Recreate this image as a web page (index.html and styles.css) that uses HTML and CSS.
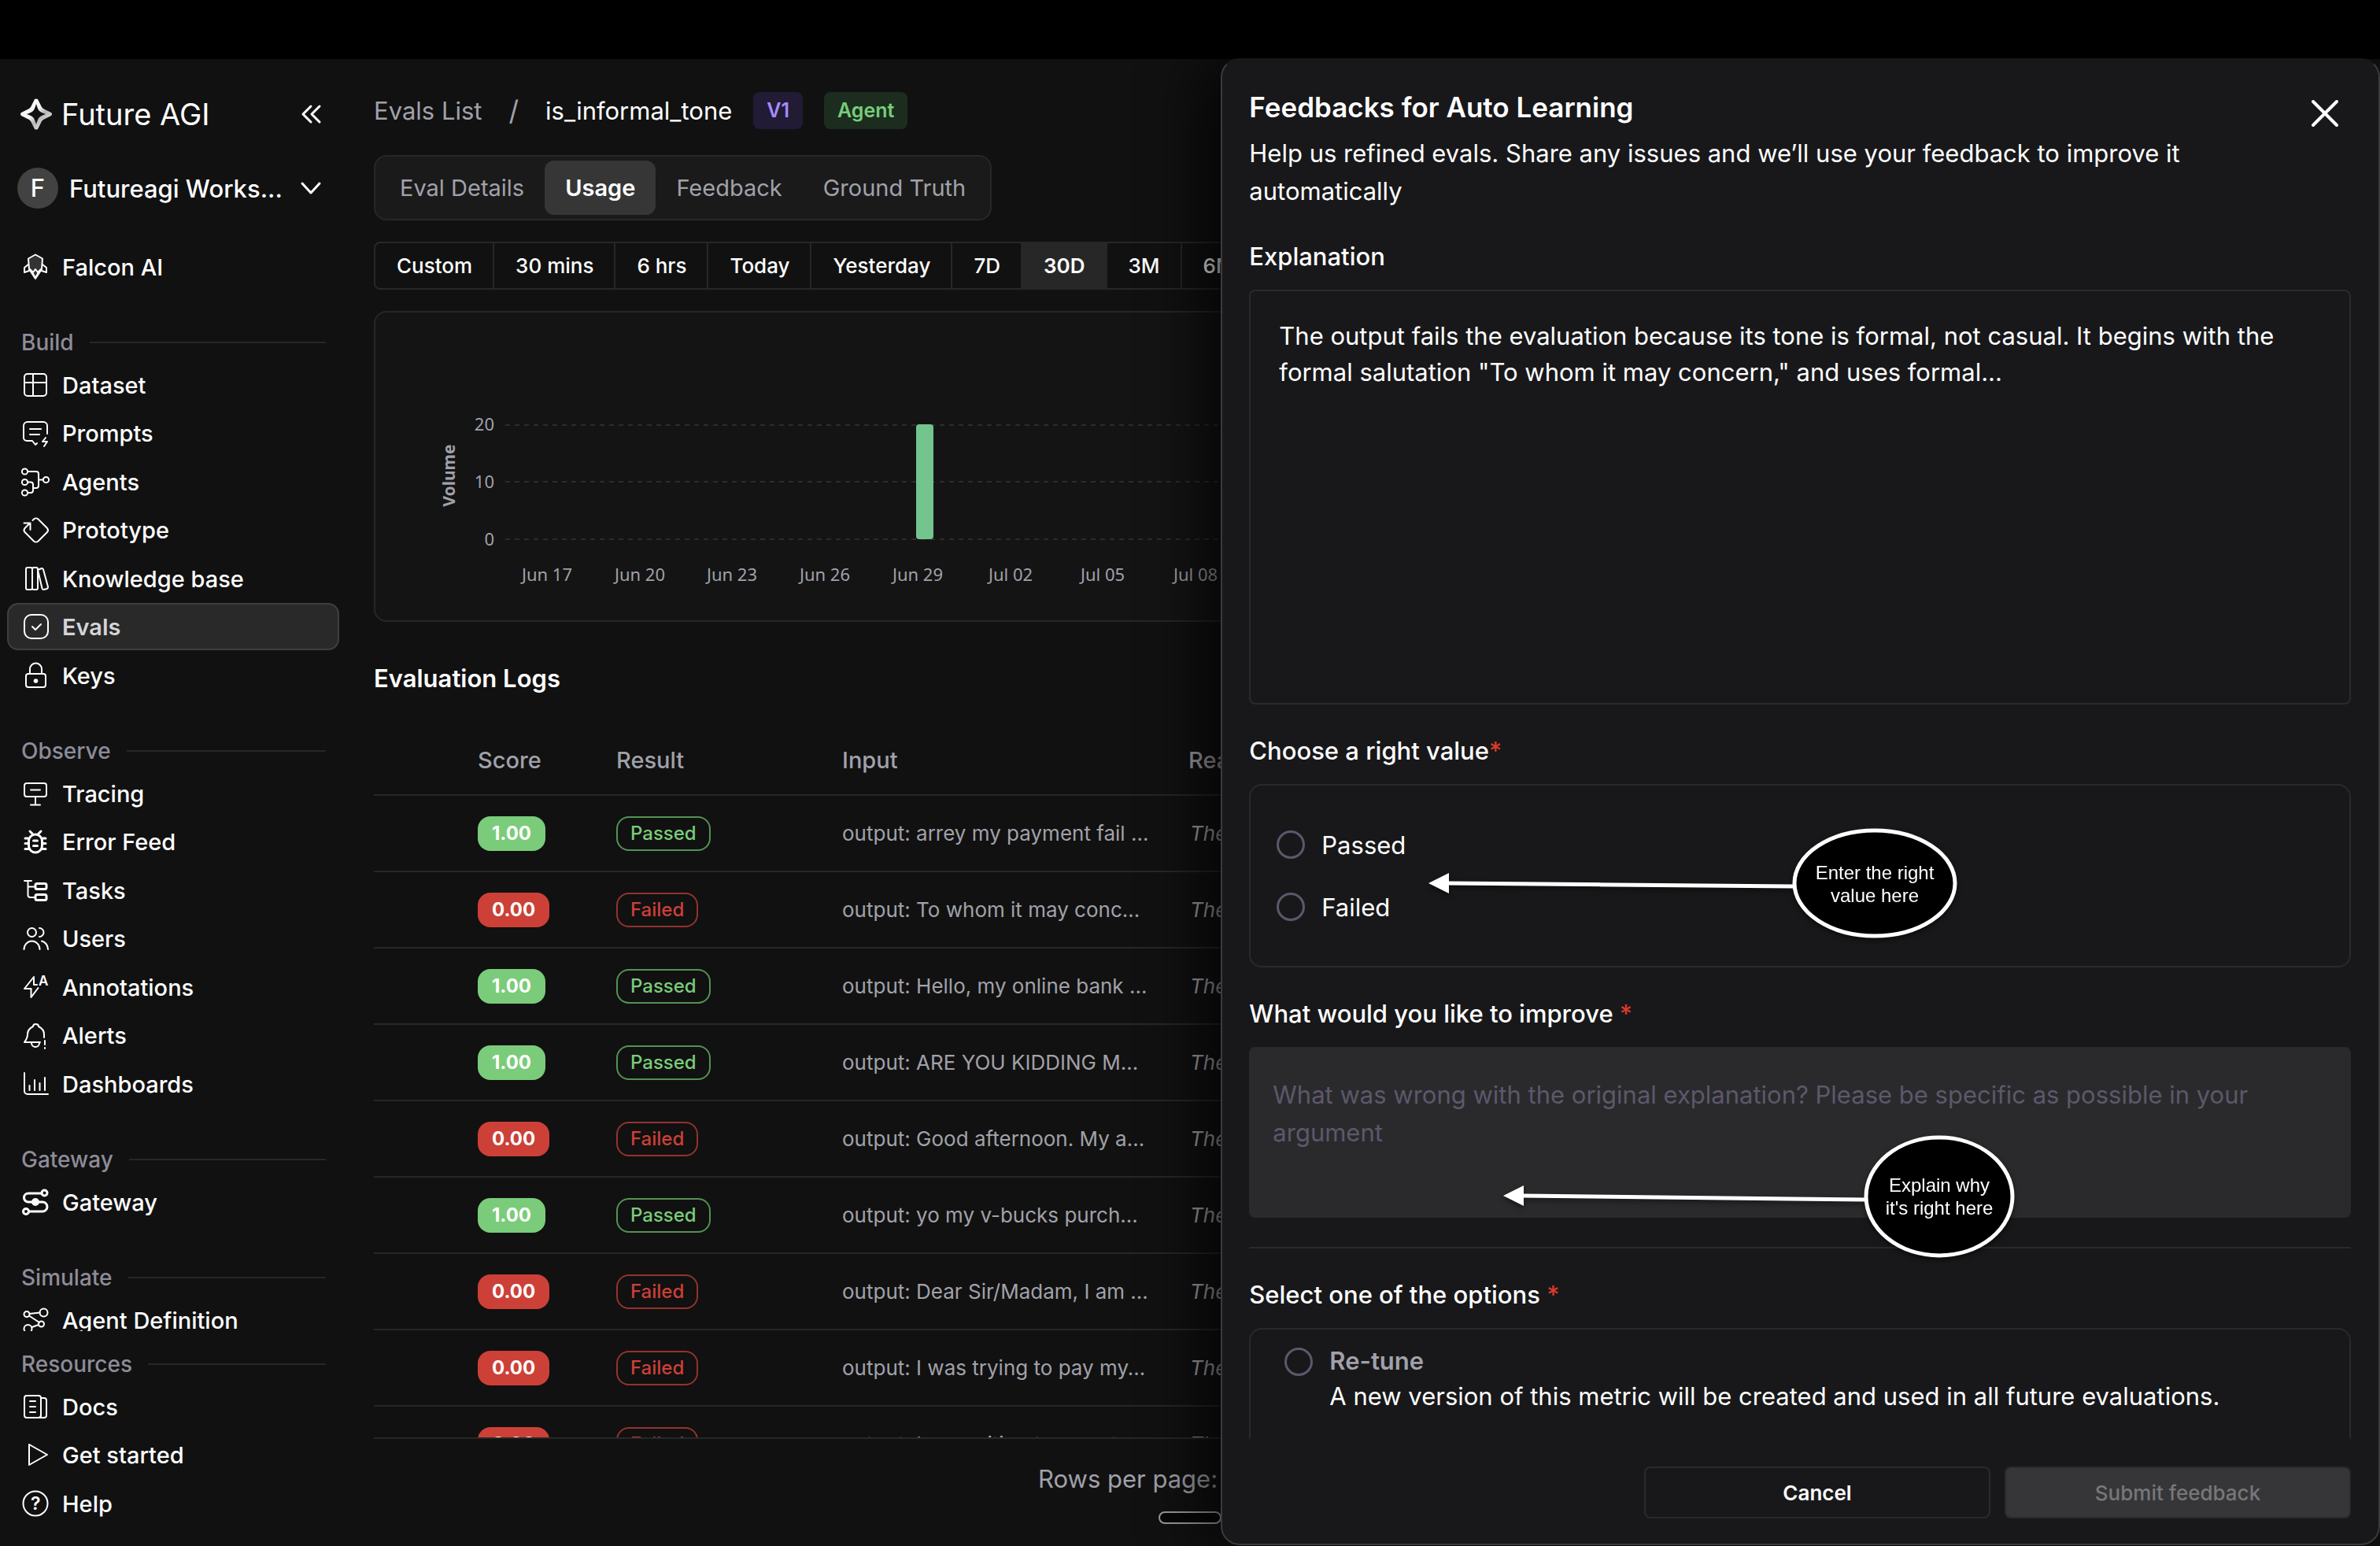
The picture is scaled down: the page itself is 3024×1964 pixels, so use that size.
FILE: index.html
```html
<!DOCTYPE html>
<html lang="en">
<head>
    <meta charset="UTF-8">
    <meta name="viewport" content="width=device-width, initial-scale=1.0">
    <title>Future AGI - Evals</title>
    <link rel="stylesheet" href="styles.css">
</head>
<body>

    <div class="app">
        <aside class="sidebar">
            <div class="brand">
                <svg class="brand-logo" viewBox="0 0 40 40">
                    <defs>
                        <linearGradient id="silver" x1="0" y1="0" x2="1" y2="1">
                            <stop offset="0" stop-color="#ffffff"/>
                            <stop offset="0.45" stop-color="#f2f2f2"/>
                            <stop offset="0.6" stop-color="#b5b5b5"/>
                            <stop offset="1" stop-color="#ffffff"/>
                        </linearGradient>
                    </defs>
                    <path class="brand-star" fill-rule="evenodd" d="M18 1Q20 0 22 1L27 11 29 13 39 18Q41 20 39 22L29 27 27 29 22 39Q20 40 18 39L13 29 11 27 1 22Q-1 20 1 18L11 13 13 11ZM20 7Q18 14 16 16 14 18 8 20 14 22 16 24 18 26 20 33 22 26 24 24 26 22 32 20 26 18 24 16 22 14 20 7Z"/>
                </svg>
                <span class="brand-name">Future AGI</span>
                <button class="icon-button" aria-label="Collapse sidebar">
                    <svg viewBox="0 0 26 26"><path d="M13 3 3 13l10 10M24 3 14 13l10 10"/></svg>
                </button>
            </div>

            <button class="workspace">
                <span class="avatar">F</span>
                <span class="workspace-name">Futureagi Works...</span>
                <svg viewBox="0 0 26 26"><path d="M2 7l11 12L24 7"/></svg>
            </button>

            <nav class="nav-scroll">
                <ul class="nav-list">
                    <li><a href="#"><svg viewBox="0 0 36 36"><path d="M18 2.500 27 7.500 26 21 18 33 10 21 9 7.500Z" fill="#333"/><path d="M11 21l4 4 3-4 3 4 4-4M14 25l4 7 4-7M9 15l-5 4v6l6-2M27 15l5 4v6l-6-2"/></svg>Falcon AI</a></li>
                </ul>

                <h2 class="nav-label">Build</h2>
                <ul class="nav-list">
                    <li><a href="#"><svg viewBox="0 0 36 36"><rect x="4" y="4" width="28" height="28" rx="4"/><path d="M4 15h28M15 4v28"/></svg>Dataset</a></li>
                    <li><a href="#"><svg viewBox="0 0 36 36"><path d="M33 19V9a5 5 0 0 0-5-5H8a5 5 0 0 0-5 5v15a4 4 0 0 0 4 4h7l4 5 2-2M11 13h14M11 20h12M31 24l-4 5h6l-4 6"/></svg>Prompts</a></li>
                    <li><a href="#"><svg viewBox="0 0 36 36"><circle cx="4.500" cy="5" r="3.600"/><circle cx="4.500" cy="18.500" r="3.600"/><circle cx="4.500" cy="32" r="3.600"/><circle cx="31.500" cy="15.500" r="3.600"/><path d="M8 5h11a3 3 0 0 1 3 3v15a3 3 0 0 1-3 3h-4M22 15.500h6M8 18.500h4a3 3 0 0 1 3 3V29a3 3 0 0 1-3 3H8"/></svg>Agents</a></li>
                    <li><a href="#"><svg viewBox="0 0 36 36"><path d="M14.500 6l1.500-1.500a4 4 0 0 1 5.500 0L33 16a4 4 0 0 1 0 5L21.500 32.500a4 4 0 0 1-5.500 0L4.500 21a4 4 0 0 1 0-5l6-6M3.500 9.500h8V18"/></svg>Prototype</a></li>
                    <li><a href="#"><svg viewBox="0 0 36 36"><rect x="6" y="4" width="8" height="28" rx="2"/><rect x="14" y="4" width="7" height="28" rx="2"/><path d="M21 7l5-2q1.500 0 2 1.500l6 22q0 2-1.500 2.500l-4 1q-1.500 0-2-1.500Z"/></svg>Knowledge base</a></li>
                    <li><a href="#" class="active"><svg viewBox="0 0 36 36"><rect x="4" y="3" width="30" height="30" rx="9"/><path d="M14 18l4 4 7-7"/></svg>Evals</a></li>
                    <li><a href="#"><svg viewBox="0 0 36 36"><rect x="6" y="16" width="25" height="17" rx="3"/><path d="M11 16v-6a7.500 7.500 0 0 1 15 0v6"/><circle cx="18.500" cy="25" r="1.800" fill="#fff"/></svg>Keys</a></li>
                </ul>

                <h2 class="nav-label">Observe</h2>
                <ul class="nav-list">
                    <li><a href="#"><svg viewBox="0 0 36 36"><rect x="4" y="5" width="28" height="17" rx="3"/><path d="M12 13.500h12M18 22v10M12 32.500h12"/></svg>Tracing</a></li>
                    <li><a href="#"><svg viewBox="0 0 36 36"><g stroke-width="3"><rect x="9.500" y="9" width="17" height="23" rx="8.500"/><path d="M11 5l4 4M25 5l-4 4M5 14h4M5 20.500h4M5 27.500h4M27 14h4M27 20.500h4M27 27.500h4M15.500 17h5M15.500 23.500h5"/></g></svg>Error Feed</a></li>
                    <li><a href="#"><svg viewBox="0 0 36 36"><path d="M4 6h9M8.500 6v18a3 3 0 0 0 3 3h6M8.500 13.500h9"/><rect x="18" y="9.500" width="14" height="7" rx="2" stroke-width="3"/><rect x="18" y="23.500" width="14" height="7" rx="2" stroke-width="3"/></svg>Tasks</a></li>
                    <li><a href="#"><svg viewBox="0 0 36 36"><circle cx="13.500" cy="10.500" r="5.500"/><path d="M3.500 32a10 10.500 0 0 1 20 0M23 5a5.500 5.500 0 0 1 0 11M26 21.500c5 1.500 7.500 5.500 8 10.500"/></svg>Users</a></li>
                    <li><a href="#"><svg viewBox="0 0 36 36"><path d="M20 15h-4V5L4 20h8.500v11L21.500 19"/><text class="icon-letter" x="22" y="16" font-size="17">A</text></svg>Annotations</a></li>
                    <li><a href="#"><svg viewBox="0 0 36 36"><path d="M29 21v-4c0-5-3-8-7-10 0-4-7-4-7 0-4 2-7 5-7 10 0 4-1 6-4 10h20M13 28a5 5 0 0 0 10 0M30 25v5M30 34v1"/></svg>Alerts</a></li>
                    <li><a href="#"><svg viewBox="0 0 36 36"><path d="M4 4v23a4 4 0 0 0 4 4h26M10.500 20v6M17 13v13M23.500 17v9M30 10v16"/></svg>Dashboards</a></li>
                </ul>

                <h2 class="nav-label">Gateway</h2>
                <ul class="nav-list">
                    <li><a href="#"><svg viewBox="0 0 36 36"><g stroke-width="3"><circle cx="29.500" cy="6.500" r="3.500"/><circle cx="6" cy="30" r="3.500"/><circle cx="18" cy="18" r="3.500" fill="#fff"/><path d="M26 7H9a5.500 5.500 0 0 0 0 11h18a5.500 5.500 0 0 1 0 12H10"/></g></svg>Gateway</a></li>
                </ul>

                <h2 class="nav-label">Simulate</h2>
                <ul class="nav-list">
                    <li><a href="#"><svg viewBox="0 0 36 36"><circle cx="7" cy="10.500" r="3.500"/><circle cx="28.500" cy="8.500" r="5"/><circle cx="25.500" cy="23" r="3.500"/><circle cx="8.500" cy="29" r="5"/><path d="M10.500 10l13-1.500M10 12.500l13 8.500M13.500 27l8.500-3"/></svg>Agent Definition</a></li>
                </ul>
            </nav>

            <nav class="nav-bottom">
                <h2 class="nav-label">Resources</h2>
                <ul class="nav-list">
                    <li><a href="#"><svg viewBox="0 0 36 36"><rect x="4" y="4" width="21" height="28" rx="3"/><path d="M25 7h4a3 3 0 0 1 3 3v19a3 3 0 0 1-3 3h-7q3 0 3-3M11 11h7M11 18h7M11 25h7"/></svg>Docs</a></li>
                    <li><a href="#"><svg viewBox="0 0 36 36"><path d="M10 5l23 13-23 13Z"/></svg>Get started</a></li>
                    <li><a href="#"><svg viewBox="0 0 36 36"><circle cx="18" cy="18" r="15.500"/><text class="icon-letter" x="12" y="26" font-size="23">?</text></svg>Help</a></li>
                </ul>
            </nav>
        </aside>

        <main class="main">
            <div class="breadcrumb">
                <a href="#">Evals List</a>
                <span class="slash">/</span>
                <span class="current">is_informal_tone</span>
                <span class="badge badge-version">V1</span>
                <span class="badge badge-agent">Agent</span>
            </div>

            <div class="tabs" role="tablist">
                <button role="tab">Eval Details</button>
                <button role="tab" class="selected">Usage</button>
                <button role="tab">Feedback</button>
                <button role="tab">Ground Truth</button>
            </div>

            <div class="ranges">
                <button>Custom</button>
                <button>30 mins</button>
                <button>6 hrs</button>
                <button>Today</button>
                <button>Yesterday</button>
                <button>7D</button>
                <button class="selected">30D</button>
                <button>3M</button>
                <button>6M</button>
            </div>

            <section class="chart-card">
                <svg class="chart" width="1600" height="391">
                    <g class="grid">
                        <path d="M165 143H1600M165 215H1600M165 288H1600"/>
                    </g>
                    <rect class="bar" x="687" y="142" width="22" height="146" rx="4"/>
                    <g class="axis-y">
                        <text x="151" y="150">20</text>
                        <text x="151" y="223">10</text>
                        <text x="151" y="296">0</text>
                    </g>
                    <text class="axis-title" transform="translate(101 207) rotate(-90)">Volume</text>
                    <g class="axis-x">
                        <text x="218" y="341">Jun 17</text>
                        <text x="336" y="341">Jun 20</text>
                        <text x="453" y="341">Jun 23</text>
                        <text x="571" y="341">Jun 26</text>
                        <text x="689" y="341">Jun 29</text>
                        <text x="807" y="341">Jul 02</text>
                        <text x="924" y="341">Jul 05</text>
                        <text x="1042" y="341">Jul 08</text>
                    </g>
                </svg>
            </section>

            <h1 class="logs-title">Evaluation Logs</h1>

            <div class="table-wrap">
                <table class="logs">
                    <colgroup>
                        <col class="col-select">
                        <col class="col-score">
                        <col class="col-result">
                        <col class="col-input">
                        <col>
                    </colgroup>
                    <thead>
                        <tr><th></th><th>Score</th><th>Result</th><th>Input</th><th>Reason</th></tr>
                    </thead>
                    <tbody>
                        <tr><td></td><td><span class="score pass">1.00</span></td><td><span class="result pass">Passed</span></td><td>output: arrey my payment fail ...</td><td class="reason">The</td></tr>
                        <tr><td></td><td><span class="score fail">0.00</span></td><td><span class="result fail">Failed</span></td><td>output: To whom it may conc...</td><td class="reason">The</td></tr>
                        <tr><td></td><td><span class="score pass">1.00</span></td><td><span class="result pass">Passed</span></td><td>output: Hello, my online bank ...</td><td class="reason">The</td></tr>
                        <tr><td></td><td><span class="score pass">1.00</span></td><td><span class="result pass">Passed</span></td><td>output: ARE YOU KIDDING M...</td><td class="reason">The</td></tr>
                        <tr><td></td><td><span class="score fail">0.00</span></td><td><span class="result fail">Failed</span></td><td>output: Good afternoon. My a...</td><td class="reason">The</td></tr>
                        <tr><td></td><td><span class="score pass">1.00</span></td><td><span class="result pass">Passed</span></td><td>output: yo my v-bucks purch...</td><td class="reason">The</td></tr>
                        <tr><td></td><td><span class="score fail">0.00</span></td><td><span class="result fail">Failed</span></td><td>output: Dear Sir/Madam, I am ...</td><td class="reason">The</td></tr>
                        <tr><td></td><td><span class="score fail">0.00</span></td><td><span class="result fail">Failed</span></td><td>output: I was trying to pay my...</td><td class="reason">The</td></tr>
                        <tr><td></td><td><span class="score fail">0.00</span></td><td><span class="result fail">Failed</span></td><td>output: I am writing to report...</td><td class="reason">The</td></tr>
                    </tbody>
                </table>
            </div>

            <footer class="pager">
                <span>Rows per page:</span>
                <div class="scroll-thumb"></div>
            </footer>
        </main>

        <form class="drawer">
            <div class="drawer-body">
                <header class="drawer-header">
                    <h2>Feedbacks for Auto Learning</h2>
                    <button type="button" class="close" aria-label="Close">
                        <svg viewBox="0 0 40 40"><path d="M5 5l30 30M35 5 5 35"/></svg>
                    </button>
                </header>
                <p class="drawer-sub">Help us refined evals. Share any issues and we’ll use your feedback to improve it automatically</p>

                <label class="field-label" for="explanation">Explanation</label>
                <textarea id="explanation" class="explanation" readonly>The output fails the evaluation because its tone is formal, not casual. It begins with the formal salutation "To whom it may concern," and uses formal...</textarea>

                <div class="field-label">Choose a right value<span class="required">*</span></div>
                <div class="box choices">
                    <label><input type="radio" name="value">Passed</label>
                    <label><input type="radio" name="value">Failed</label>
                    <svg class="callout callout-value" width="690" height="160">
                        <path class="arrow" d="M30 77 468 81"/>
                        <path class="head" d="M5 77 31 64v26Z"/>
                        <ellipse cx="572" cy="77" rx="102" ry="67"/>
                        <text x="572" y="72">Enter the right</text>
                        <text x="572" y="101">value here</text>
                    </svg>
                </div>

                <label class="field-label" for="improve">What would you like to improve <span class="required">*</span></label>
                <div class="improve-wrap">
                    <textarea id="improve" class="improve" placeholder="What was wrong with the original explanation? Please be specific as possible in your argument"></textarea>
                    <svg class="callout callout-improve" width="670" height="175">
                        <path class="arrow" d="M30 84 466 89"/>
                        <path class="head" d="M5 84 31 71v26Z"/>
                        <ellipse cx="559" cy="85" rx="93" ry="75"/>
                        <text x="559" y="79">Explain why</text>
                        <text x="559" y="108">it's right here</text>
                    </svg>
                </div>

                <hr class="divider">

                <div class="field-label">Select one of the options <span class="required">*</span></div>
                <div class="box options">
                    <label class="option">
                        <input type="radio" name="option">
                        <span>
                            <strong>Re-tune</strong>
                            A new version of this metric will be created and used in all future evaluations.
                        </span>
                    </label>
                </div>
            </div>

            <div class="drawer-footer">
                <button type="button" class="cancel">Cancel</button>
                <button type="submit" class="submit" disabled>Submit feedback</button>
            </div>
        </form>
    </div>

</body>
</html>
```

FILE: styles.css
```css
* {
    box-sizing: border-box;
}

body {
    margin: 0;
    padding-top: 75px;
    height: 100vh;
    background-color: #000;
    color: #fff;
    font-family: Inter, "Liberation Sans", sans-serif;
    font-size: 31px;
    overflow: hidden;
}

h1, h2, p, ul {
    margin: 0;
    padding: 0;
}

ul {
    list-style: none;
}

button {
    font-family: inherit;
    color: inherit;
    background: none;
    border: none;
    padding: 0;
    cursor: pointer;
}

a {
    color: inherit;
    text-decoration: none;
}

.app {
    position: relative;
    display: flex;
    height: 100%;
    background-color: #111;
}

/* sidebar */
.sidebar {
    flex: none;
    display: flex;
    flex-direction: column;
    width: 448px;
    padding: 40px 17px 24px 9px;
}

.sidebar svg {
    flex: none;
    fill: none;
    stroke: #fff;
    stroke-width: 2;
    stroke-linecap: round;
    stroke-linejoin: round;
    overflow: visible;
}

.brand {
    display: flex;
    align-items: center;
    height: 60px;
    padding: 0 23px 0 17px;
}

.brand-logo {
    width: 40px;
    height: 40px;
}

.sidebar .brand-star {
    fill: url(#silver);
    stroke: none;
}

.brand-name {
    flex: 1;
    margin-left: 12px;
    font-size: 38px;
}

.icon-button svg,
.workspace svg {
    display: block;
    width: 26px;
    height: 26px;
    stroke-width: 3;
}

.workspace {
    display: flex;
    align-items: center;
    height: 60px;
    margin-top: 34px;
    padding: 0 23px 0 13px;
    font-size: 31px;
    font-weight: 500;
}

.avatar {
    width: 52px;
    height: 52px;
    border-radius: 50%;
    background-color: #424242;
    line-height: 52px;
    text-align: center;
}

.workspace-name {
    flex: 1;
    margin-left: 14px;
    text-align: left;
}

.nav-scroll {
    flex: 1;
    min-height: 0;
    margin-top: 40px;
    overflow: hidden;
}

.nav-list {
    display: grid;
    gap: 1px;
}

.nav-list li:nth-child(odd):not(:first-child) {
    margin-top: 1px;
}

.nav-list a {
    display: flex;
    align-items: center;
    gap: 16px;
    height: 60px;
    padding-left: 16px;
    border: 2px solid transparent;
    border-radius: 14px;
    font-size: 29px;
    font-weight: 500;
}

.nav-list svg {
    width: 36px;
    height: 36px;
}

.nav-list a.active {
    background-color: #292929;
    border-color: #3f3f3f;
    color: #d4d4d8;
    font-weight: 600;
}

.sidebar .icon-letter {
    fill: #fff;
    stroke: none;
    font-weight: 600;
}

.nav-label {
    display: flex;
    align-items: center;
    gap: 20px;
    margin: 50px 17px 8px 18px;
    color: #8e8c99;
    font-size: 28px;
    font-weight: 500;
    line-height: 32px;
}

.nav-label::after {
    content: "";
    flex: 1;
    height: 2px;
    background-color: #272727;
}

.nav-bottom .nav-label {
    margin-top: 26px;
}

/* main */
.main {
    flex: 1;
    display: flex;
    flex-direction: column;
    align-items: flex-start;
    min-width: 0;
    padding: 41px 40px 0 27px;
}

.breadcrumb {
    display: flex;
    align-items: center;
    height: 48px;
    color: #a1a1aa;
}

.breadcrumb .slash {
    margin: 0 34px;
    font-size: 35px;
}

.breadcrumb .current {
    color: #fff;
}

.badge {
    margin-left: 27px;
    padding: 0 17px;
    border-radius: 8px;
    font-size: 25px;
    font-weight: 600;
    line-height: 47px;
}

.badge-version {
    background-color: #211b35;
    color: #a78bfa;
}

.badge-agent {
    background-color: #1c2d20;
    color: #78cd78;
}

.tabs {
    display: flex;
    margin-top: 33px;
    padding: 5px;
    border: 2px solid #272727;
    border-radius: 16px;
    background-color: #1a1a1a;
}

.tabs button {
    height: 69px;
    padding: 0 26px;
    border-radius: 12px;
    color: #a1a1aa;
    font-size: 29px;
}

.tabs .selected {
    background-color: #363636;
    color: #fff;
    font-weight: 600;
}

.ranges {
    display: flex;
    margin-top: 27px;
    border: 2px solid #272727;
    border-radius: 8px;
}

.ranges button {
    height: 57px;
    padding: 0 26px 0 27px;
    border-right: 2px solid #272727;
    font-size: 26px;
    font-weight: 500;
}

.ranges .selected {
    background-color: #272727;
    font-weight: 600;
}

.chart-card {
    align-self: stretch;
    margin-top: 27px;
    border: 2px solid #272727;
    border-radius: 16px;
    background-color: #141414;
    overflow: hidden;
}

.chart {
    display: block;
    font-family: "Noto Sans", sans-serif;
    font-size: 22px;
    fill: #a1a1aa;
}

.grid {
    stroke: #2c2c2c;
    stroke-width: 2;
    stroke-dasharray: 6 6;
}

.bar {
    fill: #73c48f;
}

.axis-y {
    text-anchor: end;
}

.axis-x,
.axis-title {
    text-anchor: middle;
}

.axis-title {
    font-size: 21px;
    font-weight: 700;
}

.logs-title {
    margin-top: 54px;
    font-size: 31px;
    font-weight: 600;
    line-height: 36px;
}

.table-wrap {
    flex: 1;
    align-self: stretch;
    min-height: 0;
    margin-top: 40px;
    overflow: hidden;
}

.logs {
    width: 100%;
    table-layout: fixed;
    border-collapse: collapse;
    color: #a1a1aa;
    font-size: 26px;
    text-align: left;
    white-space: nowrap;
}

.col-select {
    width: 132px;
}

.col-score {
    width: 176px;
}

.col-result {
    width: 287px;
}

.col-input {
    width: 440px;
}

.logs th {
    height: 90px;
    padding: 2px 0 0;
    border-bottom: 2px solid #272727;
    font-size: 29px;
    font-weight: 500;
}

.logs td {
    height: 97px;
    padding: 0;
    border-bottom: 2px solid #272727;
}

.logs .reason {
    padding-left: 2px;
    font-style: italic;
}

.score,
.result {
    display: inline-block;
    height: 44px;
    padding: 0 16px;
    border: 2px solid transparent;
    border-radius: 16px;
    font-size: 24px;
    line-height: 40px;
    vertical-align: middle;
}

.score {
    color: #fff;
    font-weight: 700;
}

.score.pass {
    background-color: #7acc7a;
}

.score.fail {
    background-color: #cc4038;
}

.result {
    font-weight: 500;
}

.result.pass {
    border-color: #549254;
    color: #7acc7a;
}

.result.fail {
    border-color: #93332d;
    color: #cc4038;
}

.pager {
    align-self: stretch;
    height: 138px;
    padding: 33px 0 0 844px;
    border-top: 2px solid #272727;
    color: #a1a1aa;
    line-height: 36px;
}

.scroll-thumb {
    width: 80px;
    height: 16px;
    margin: 23px 0 0 153px;
    border: 2px solid #9a9a9a;
    border-radius: 8px;
    background-color: #070707;
}

/* feedback drawer */
.drawer {
    position: absolute;
    top: -1px;
    right: 0;
    bottom: 1px;
    display: flex;
    flex-direction: column;
    width: 48.7%;
    border: 2px solid #3a3a3e;
    border-top-color: transparent;
    border-radius: 24px;
    background-color: #18181a;
    box-shadow: -20px 0 80px rgba(0, 0, 0, 0.8);
}

.drawer-body {
    flex: 1;
    min-height: 0;
    padding: 40px 35px 0 34px;
    overflow: hidden;
}

.drawer-header {
    display: flex;
    justify-content: space-between;
    height: 55px;
}

.drawer-header h2 {
    font-size: 35px;
    font-weight: 600;
    line-height: 40px;
}

.close {
    height: 40px;
    margin: 8px 13px 0 0;
}

.close svg {
    display: block;
    width: 40px;
    height: 40px;
    stroke: #fff;
    stroke-width: 4;
    stroke-linecap: round;
}

.drawer-sub {
    max-width: 1240px;
    line-height: 48px;
}

.field-label {
    display: block;
    margin: 39px 0 22px;
    font-weight: 500;
    line-height: 40px;
}

.required {
    color: #dc3a2c;
}

textarea {
    display: block;
    width: 100%;
    border: 2px solid #2a2a2c;
    border-radius: 8px;
    background: none;
    color: inherit;
    font-family: inherit;
    font-size: 31px;
    resize: none;
}

.explanation {
    height: 527px;
    padding: 34px 36px;
    line-height: 46px;
}

.improve-wrap {
    position: relative;
}

.improve {
    height: 217px;
    padding: 35px 28px;
    background-color: #2a2a2c;
    line-height: 48px;
}

.improve::placeholder {
    color: #5c586b;
}

.box {
    border: 2px solid #2a2a2c;
    border-radius: 16px;
}

.choices {
    position: relative;
    display: grid;
    justify-content: start;
    gap: 39px;
    padding: 55px 33px;
}

.choices label {
    display: flex;
    align-items: center;
    gap: 21px;
    height: 40px;
}

input[type="radio"] {
    appearance: none;
    flex: none;
    width: 36px;
    height: 36px;
    margin: 0;
    border: 3px solid #5c586b;
    border-radius: 50%;
}

.callout {
    position: absolute;
    fill: #fff;
    font-family: "Liberation Sans", Arial, sans-serif;
    font-size: 24px;
    text-anchor: middle;
    overflow: visible;
    filter: drop-shadow(0 3px 3px rgba(0, 0, 0, 0.5));
}

.callout-value {
    left: 221px;
    top: 47px;
}

.callout-improve {
    left: 318px;
    top: 105px;
}

.callout .arrow {
    stroke: #fff;
    stroke-width: 5;
}

.callout ellipse {
    fill: #000;
    stroke: #fff;
    stroke-width: 5;
}

.divider {
    margin: 37px 0 39px;
    border: none;
    border-top: 2px solid #2a2a2c;
}

.options {
    min-height: 240px;
    padding: 17px 43px;
}

.option {
    display: flex;
    gap: 21px;
    line-height: 45px;
}

.option input {
    margin-top: 6px;
}

.option strong {
    display: block;
    color: #a1a1aa;
    font-weight: 600;
}

.drawer-footer {
    display: flex;
    justify-content: flex-end;
    gap: 18px;
    padding: 36px 35px 32px;
}

.drawer-footer button {
    width: 440px;
    height: 66px;
    border: 2px solid #2a2a2c;
    border-radius: 8px;
    font-size: 26px;
    font-weight: 600;
}

.drawer-footer .submit {
    background-color: #363638;
    color: #77777a;
    font-weight: 500;
}
```
